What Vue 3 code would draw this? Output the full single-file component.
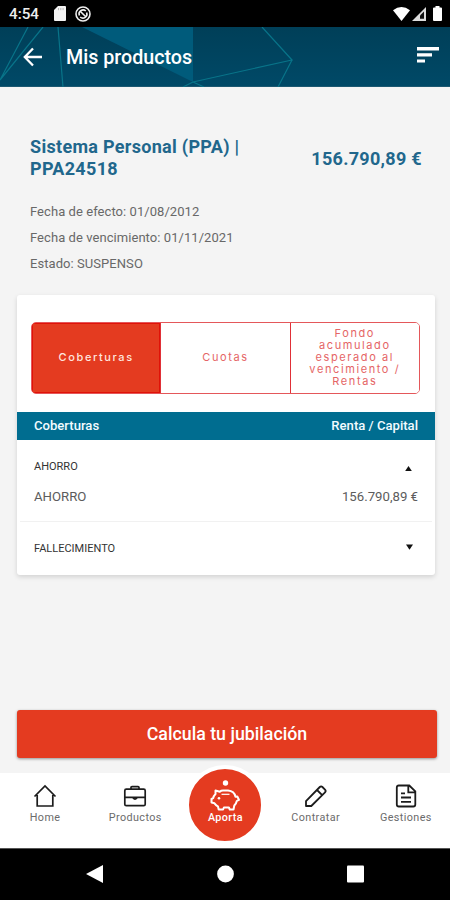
<template>
  <div class="screen">
    <div class="status-bar">
      <span class="clock">4:54</span>
      <svg class="sd-icon" width="12" height="15" viewBox="0 0 12 15">
        <path d="M4 0h7q1 0 1 1v13q0 1-1 1H1q-1 0-1-1V4z" fill="#f4f4f4" />
        <path d="M4.5 2v2.2M6.8 2v2.2M9.1 2v2.2" stroke="#aaa" stroke-width=".8" />
      </svg>
      <svg class="sync-icon" width="16" height="16" viewBox="0 0 16 16" fill="none" stroke="#eee">
        <circle cx="8" cy="8" r="7" stroke-width="1.6" />
        <path d="M4.4 9.5A4 4 0 0 1 10.8 5M11.6 6.5A4 4 0 0 1 5.2 11M5 5l6 6" stroke-width="1.6" />
      </svg>
      <div class="status-right">
        <svg width="17" height="14" viewBox="0 0 17 14">
          <path d="M0 3.2Q8.5-3 17 3.2L8.5 14z" fill="#fff" />
        </svg>
        <svg width="14" height="14" viewBox="0 0 14 14">
          <path d="M0 14L14 0V14z" fill="#ddd" />
          <path d="M8 11.8V8.5L12 4.5v7.3z" fill="#111" />
        </svg>
        <svg width="9" height="15" viewBox="0 0 9 15">
          <path d="M2.5 0h4v1.5H8q1 0 1 1V14q0 1-1 1H1q-1 0-1-1V2.5q0-1 1-1h1.5z" fill="#fff" />
        </svg>
      </div>
    </div>

    <header class="header">
      <svg class="header-art" width="450" height="60" viewBox="0 0 450 60" fill="none">
        <path d="M82 0H193V55z" fill="#005b7b" />
        <g stroke="#087489" stroke-width="1.2">
          <path d="M28 0L0 53M43 0L0 53M58 0L63 60M193 55L292 33L262 0M292 33L278 60M193 55L183 60M193 55L204 60" />
        </g>
      </svg>
      <svg class="back" width="20" height="20" viewBox="0 0 20 20" fill="none" stroke="#fff" stroke-width="2.3">
        <path d="M19 10H2M10 1.5L1.8 10l8.2 8.5" />
      </svg>
      <h1>Mis productos</h1>
      <svg class="menu" width="22" height="16" viewBox="0 0 22 16" fill="#fff">
        <path d="M0 0h22v3.4H0zM0 6.3h15v3.2H0zM0 12.5h8v3H0z" />
      </svg>
    </header>

    <main class="content">
      <div class="product">
        <h2>Sistema Personal (PPA) |<br>PPA24518</h2>
        <span class="amount">156.790,89 €</span>
      </div>
      <div class="details">
        <p v-for="line in details" :key="line">{{ line }}</p>
      </div>

      <section class="card">
        <div class="tabs">
          <button
            v-for="(tab, i) in tabs"
            :key="i"
            class="tab"
            :class="{ active: activeTab === i }"
            @click="activeTab = i"
          >{{ tab }}</button>
        </div>
        <div class="table-head">
          <span>Coberturas</span>
          <span>Renta / Capital</span>
        </div>
        <div class="group open">
          <div class="group-head" @click="savingsOpen = !savingsOpen">
            <span class="group-name">AHORRO</span>
            <svg class="caret" :class="{ down: !savingsOpen }" width="7" height="5" viewBox="0 0 8 6">
              <path d="M4 0L8 6H0z" />
            </svg>
          </div>
          <div v-if="savingsOpen" class="group-row">
            <span>AHORRO</span>
            <span>156.790,89 €</span>
          </div>
        </div>
        <div class="group closed">
          <span class="group-name">FALLECIMIENTO</span>
          <svg class="caret down" width="7" height="6" viewBox="0 0 8 6">
            <path d="M4 0L8 6H0z" />
          </svg>
        </div>
      </section>

      <button class="cta">Calcula tu jubilación</button>
    </main>

    <nav class="tab-bar">
      <a class="nav-item">
        <svg width="24" height="24" viewBox="0 0 24 24" fill="none" stroke="#1c1c1c" stroke-width="1.7">
          <path d="M1.5 12.5L12 2l10.5 10.5M4.2 11v11h15.6V11" />
        </svg>
        <span>Home</span>
      </a>
      <a class="nav-item">
        <svg width="24" height="24" viewBox="0 0 24 24" fill="none" stroke="#1c1c1c" stroke-width="1.7">
          <rect x="1.8" y="5.2" width="20.4" height="16.5" rx="1.5" />
          <path d="M8 5V3.6q0-1 1-1h6q1 0 1 1V5M2 13.4h20M10 14q2 2 4 0" />
        </svg>
        <span>Productos</span>
      </a>
      <a class="nav-item main">
        <span class="bubble">
          <svg width="30" height="31" viewBox="0 0 30 31" fill="none" stroke="#fff" stroke-width="2" stroke-linejoin="round">
            <circle cx="15.5" cy="3" r="2.7" fill="#fff" stroke="none" />
            <path d="M5.5 10.5V14Q3.5 16 3.2 18.2L1.5 19v3.5l3 .8q1.8 2.500 3.500 3.200l.7 3h4.400l.8-2h5l.9 2h3.700l.8-4q2-2 2.500-4.500l2.100-1.200-1.600-3.300-1.800.2q-1.200-5.700-7.500-6.200H13q-2 0-3.200 1.200z" />
            <path d="M11.5 14.3h8" stroke-width="1.2" />
            <circle cx="9" cy="18.3" r="1.3" fill="#fff" stroke="none" />
          </svg>
          <span>Aporta</span>
        </span>
      </a>
      <a class="nav-item">
        <svg width="24" height="24" viewBox="0 0 24 24" fill="none" stroke="#1c1c1c" stroke-width="1.8" stroke-linejoin="round">
          <path d="M2 17.2L15.8 3q1.3-1.3 2.6 0l2.6 2.7q1.3 1.3 0 2.6L7.3 22H2zM13 6l5.2 5.2" />
        </svg>
        <span>Contratar</span>
      </a>
      <a class="nav-item">
        <svg width="24" height="24" viewBox="0 0 24 24" fill="none" stroke="#1c1c1c" stroke-width="1.8">
          <path d="M4.8 1.5h10.5l6 5.8v13.2q0 2-2 2H4.8q-2 0-2-2V3.5q0-2 2-2zM14.3 1.8v6.500H21M7 9.300h4M7 13.500h10M7 17.800h10" />
        </svg>
        <span>Gestiones</span>
      </a>
    </nav>

    <div class="system-bar">
      <svg width="17" height="18" viewBox="0 0 17 18"><path d="M0 9L17 0v18z" fill="#fff" /></svg>
      <svg width="17" height="18" viewBox="0 0 17 18"><circle cx="8.5" cy="9" r="8.4" fill="#fff" /></svg>
      <svg width="17" height="18" viewBox="0 0 17 18"><rect y=".4" width="17" height="17.2" rx="1" fill="#fff" /></svg>
    </div>
  </div>
</template>

<script setup>
import { ref } from 'vue'

const activeTab = ref(0)
const savingsOpen = ref(true)

const details = [
  'Fecha de efecto: 01/08/2012',
  'Fecha de vencimiento: 01/11/2021',
  'Estado: SUSPENSO'
]

const tabs = [
  'Coberturas',
  'Cuotas',
  'Fondo\nacumulado\nesperado al\nvencimiento /\nRentas'
]
</script>

<style>
body {
  margin: 0;
}
</style>

<style scoped>
.screen {
  width: 450px;
  height: 900px;
  display: flex;
  flex-direction: column;
  overflow: hidden;
  background: #f4f4f4;
  font-family: Roboto, sans-serif;
}

.screen * {
  box-sizing: border-box;
}

svg {
  display: block;
  flex-shrink: 0;
}

button {
  font-family: inherit;
  margin: 0;
  padding: 0;
  border: none;
}

.status-bar {
  display: flex;
  align-items: center;
  height: 27px;
  flex-shrink: 0;
  padding: 0 8px 0 9px;
  background: #000;
  color: #eee;
}

.clock {
  width: 45px;
  font-size: 15.2px;
  font-weight: 500;
}

.sync-icon {
  margin-left: 9px;
}

.status-right {
  display: flex;
  align-items: center;
  margin-left: auto;
}

.status-right svg:nth-child(2) {
  margin: 0 7px 0 2px;
}

.header {
  position: relative;
  display: flex;
  align-items: center;
  height: 60px;
  flex-shrink: 0;
  padding: 0 11px 0 23px;
  background: linear-gradient(#003f58, #004967);
  border-bottom: 1px solid #1c5871;
}

.header-art {
  position: absolute;
  left: 0;
  top: 0;
}

.back,
.header h1,
.menu {
  position: relative;
}

.header h1 {
  margin: 0 0 0 23px;
  padding-top: 2px;
  color: #fff;
  font-size: 19.7px;
  font-weight: 500;
}

.menu {
  margin: 0 0 4px auto;
}

.content {
  flex: 1;
  display: flex;
  flex-direction: column;
  padding: 49px 13px 15px 17px;
}

.product {
  display: flex;
  justify-content: space-between;
  align-items: center;
  padding: 0 15px 0 13px;
  color: #21678c;
}

.product h2 {
  margin: 0;
  font-size: 18px;
  line-height: 22px;
  font-weight: 700;
  letter-spacing: 0.3px;
}

.amount {
  font-size: 18px;
  font-weight: 700;
  letter-spacing: 0.3px;
}

.details {
  margin: 19px 0 0 13px;
}

.details p {
  margin: 0;
  color: #686868;
  font-size: 13px;
  line-height: 26px;
  letter-spacing: 0.06px;
}

.card {
  width: 418px;
  height: 280px;
  margin-top: 18px;
  padding-top: 27px;
  background: #fff;
  border-radius: 3px;
  box-shadow: 0 2px 5px rgba(0, 0, 0, 0.14);
}

.tabs {
  display: flex;
  width: 389px;
  height: 72px;
  margin-left: 14px;
  border: 1px solid #e4575a;
  border-radius: 5px;
  overflow: hidden;
}

.tab {
  flex: 1;
  padding-bottom: 2px;
  background: #fff;
  color: #e56566;
  border-left: 1px solid #e03037;
  font-family: Inter, sans-serif;
  font-size: 11px;
  line-height: 12px;
  letter-spacing: 1.6px;
  text-align: center;
  white-space: pre-line;
}

.tab:first-child {
  border-left: none;
}

.tab.active {
  background: #e43b20;
  color: #ffe6df;
  font-weight: 500;
  box-shadow: inset 0 0 0 1px #e01208;
}

.table-head {
  display: flex;
  justify-content: space-between;
  align-items: center;
  height: 28px;
  margin-top: 18px;
  padding: 0 17px 1px;
  background: #006d90;
  color: #f2fbff;
  font-size: 13.1px;
  font-weight: 500;
}

.group.open {
  height: 81px;
  padding: 16px 17px 0;
}

.group-head,
.group-row,
.group.closed {
  display: flex;
  justify-content: space-between;
  align-items: center;
}

.group-head {
  height: 20px;
}

.group-name {
  color: #333;
  font-size: 11px;
}

.caret {
  margin-right: 6px;
  fill: #111;
}

.group-head .caret {
  margin-top: 5px;
}

.caret.down {
  transform: rotate(180deg);
}

.group-row {
  height: 20px;
  margin-top: 10px;
  color: #5c5c5c;
  font-size: 13.2px;
}

.group.closed {
  height: 53px;
  margin: 0 3px;
  padding: 0 14px;
  border-top: 1px solid #f1f1f1;
}

.group.closed .caret {
  margin-right: 5px;
  margin-bottom: 2px;
}

.cta {
  height: 48px;
  width: 420px;
  flex-shrink: 0;
  margin-top: auto;
  padding-bottom: 2px;
  background: #e43b20;
  color: #fff;
  border-radius: 3px;
  font-size: 17.8px;
  font-weight: 500;
  box-shadow: 0 1px 3px rgba(0, 0, 0, 0.4);
}

.tab-bar {
  display: flex;
  height: 75px;
  flex-shrink: 0;
  background: #fff;
}

.nav-item {
  flex: 0 0 90.2px;
  display: flex;
  flex-direction: column;
  align-items: center;
  padding-top: 11px;
  color: #6b6b6b;
  font-size: 10.8px;
  line-height: 14px;
  letter-spacing: 0.4px;
}

.nav-item > span:not(.bubble) {
  margin-top: 3px;
}

.nav-item.main {
  padding: 0;
}

.bubble {
  display: flex;
  flex-direction: column;
  align-items: center;
  width: 80px;
  height: 80px;
  margin-top: -8px;
  padding-top: 11px;
  border: 4px solid #fff;
  border-radius: 50%;
  background: #e43b20;
  color: #fff;
  font-weight: 500;
}

.system-bar {
  display: flex;
  justify-content: space-between;
  align-items: center;
  height: 52px;
  flex-shrink: 0;
  padding: 0 86px 1px 86px;
  background: #000;
  border-top: 1px solid #555;
}
</style>
